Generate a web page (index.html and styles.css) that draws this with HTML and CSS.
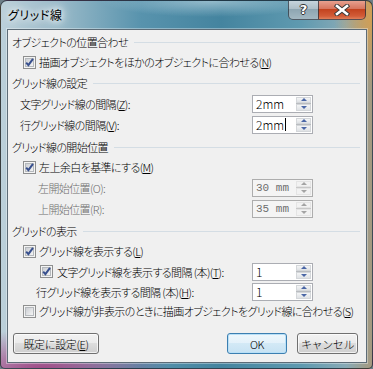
FILE: index.html
```html
<!DOCTYPE html>
<html lang="ja">
<head>
  <meta charset="UTF-8">
  <title>グリッド線</title>
  <link rel="stylesheet" href="styles.css">
</head>
<body>

<div class="window">
  <div class="titlebar">
    <span class="title">グリッド線</span>
    <div class="caption">
      <span class="cap help">?</span>
      <span class="cap close">
        <svg width="16" height="12" viewBox="0 0 16 12">
          <path d="M3 2 L13 10 M13 2 L3 10" stroke="#3a3a3a" stroke-width="4.5" stroke-linecap="square"/>
          <path d="M3 2 L13 10 M13 2 L3 10" stroke="#fff" stroke-width="2.6" stroke-linecap="square"/>
        </svg>
      </span>
    </div>
  </div>

  <div class="client">
    <div class="group-head"><span>オブジェクトの位置合わせ</span></div>
    <div class="row check-row">
      <svg class="cb"><use href="#cb-on"/></svg>
      <span>描画オブジェクトをほかのオブジェクトに合わせる(<u>N</u>)</span>
    </div>

    <div class="group-head gh2"><span>グリッド線の設定</span></div>
    <div class="row spin-row">
      <span class="lbl ind1">文字グリッド線の間隔(<u>Z</u>):</span>
      <div class="spin"><span class="val">2mm</span><span class="arrows"><i class="up"></i><i class="down"></i></span></div>
    </div>
    <div class="row spin-row">
      <span class="lbl ind1">行グリッド線の間隔(<u>V</u>):</span>
      <div class="spin"><span class="val">2mm<b class="caret"></b></span><span class="arrows"><i class="up"></i><i class="down"></i></span></div>
    </div>

    <div class="group-head gh3"><span>グリッド線の開始位置</span></div>
    <div class="row check-row">
      <svg class="cb"><use href="#cb-on"/></svg>
      <span>左上余白を基準にする(<u>M</u>)</span>
    </div>
    <div class="row spin-row disabled">
      <span class="lbl ind2">左開始位置(O):</span>
      <div class="spin"><span class="val mono">30 mm</span><span class="arrows"><i class="up"></i><i class="down"></i></span></div>
    </div>
    <div class="row spin-row disabled">
      <span class="lbl ind2">上開始位置(R):</span>
      <div class="spin"><span class="val mono">35 mm</span><span class="arrows"><i class="up"></i><i class="down"></i></span></div>
    </div>

    <div class="group-head gh3"><span>グリッドの表示</span></div>
    <div class="row check-row">
      <svg class="cb"><use href="#cb-on"/></svg>
      <span>グリッド線を表示する(<u>L</u>)</span>
    </div>
    <div class="row spin-row">
      <div class="nested">
        <svg class="cb"><use href="#cb-on"/></svg>
        <span>文字グリッド線を表示する間隔 (本)(<u>T</u>):</span>
      </div>
      <div class="spin"><span class="val">1</span><span class="arrows"><i class="up"></i><i class="down"></i></span></div>
    </div>
    <div class="row spin-row short">
      <span class="lbl ind3">行グリッド線を表示する間隔 (本)(<u>H</u>):</span>
      <div class="spin"><span class="val">1</span><span class="arrows"><i class="up"></i><i class="down"></i></span></div>
    </div>
    <div class="row check-row">
      <svg class="cb"><use href="#cb-off"/></svg>
      <span>グリッド線が非表示のときに描画オブジェクトをグリッド線に合わせる(<u>S</u>)</span>
    </div>

    <div class="footer">
      <button class="btn wide">既定に設定(<u>E</u>)</button>
      <span class="spacer"></span>
      <button class="btn default">OK</button>
      <button class="btn">キャンセル</button>
    </div>
  </div>
</div>

<svg class="defs" width="0" height="0">
  <defs>
    <linearGradient id="cb-fill" x1="0" y1="0" x2="1" y2="1">
      <stop offset="0" stop-color="#c9ccd1"/>
      <stop offset="1" stop-color="#f7f7f7"/>
    </linearGradient>
    <symbol id="cb-off" viewBox="0 0 13 13">
      <rect x="0.5" y="0.5" width="12" height="12" fill="#f4f4f4" stroke="#8e8f8f"/>
      <rect x="2.5" y="2.5" width="8" height="8" fill="url(#cb-fill)" stroke="#b5b9bd"/>
    </symbol>
    <symbol id="cb-on" viewBox="0 0 13 13">
      <rect x="0.5" y="0.5" width="12" height="12" fill="#f4f4f4" stroke="#8e8f8f"/>
      <rect x="2.5" y="2.5" width="8" height="8" fill="url(#cb-fill)" stroke="#b5b9bd"/>
      <path d="M3.2 6.6 L5.4 9.2 L10 2.8" stroke="#38508e" stroke-width="2" fill="none"/>
    </symbol>
  </defs>
</svg>

</body>
</html>
```

FILE: styles.css
```css
* {
  box-sizing: border-box;
}

body {
  margin: 0;
  background: #6d7f88;
  font-family: "Noto Sans CJK JP", sans-serif;
  font-size: 11px;
  font-weight: 300;
  letter-spacing: -0.6px;
  font-feature-settings: "palt";
  color: #000;
}

.window {
  width: 373px;
  height: 369px;
  border: 1px solid rgba(20, 30, 40, 0.75);
  border-radius: 7px 7px 5px 5px;
  overflow: hidden;
  display: flex;
  flex-direction: column;
  background:
    radial-gradient(ellipse 130px 40px at 40px 369px, rgba(160, 50, 120, 0.85), transparent),
    radial-gradient(ellipse 40px 70px at 373px 15px, rgba(215, 160, 80, 0.95), transparent),
    radial-gradient(ellipse 110px 16px at 210px 0, rgba(200, 222, 232, 0.6), transparent),
    linear-gradient(90deg, #bcd0da 0, #98b9c8 60px, #5893ad 140px, #44849f 220px, #5f9ab0 300px, #88aab6 345px, #a8987a 373px);
}

/* title bar */
.titlebar {
  height: 28px;
  display: flex;
  align-items: flex-start;
  padding-left: 7px;
}

.title {
  margin-top: 5px;
  font-size: 12px;
  font-weight: 400;
  letter-spacing: 0.6px;
  text-shadow: 0 0 6px #fff, 0 0 10px rgba(255, 255, 255, 0.9), 0 0 14px rgba(255, 255, 255, 0.8);
}

.caption {
  margin-left: auto;
  margin-right: 6px;
  margin-top: -1px;
  display: flex;
}

.cap {
  height: 20px;
  display: flex;
  align-items: center;
  justify-content: center;
  border: 1px solid rgba(40, 50, 60, 0.75);
  border-top: none;
}

.help {
  width: 30px;
  border-radius: 0 0 0 5px;
  border-right: none;
  background: linear-gradient(#c9d7df, #aebfc8 45%, #8ea6b2 50%, #a3b8c2);
  color: #fff;
  font-family: "DejaVu Sans", sans-serif;
  font-weight: bold;
  font-size: 13px;
  letter-spacing: 0;
  text-shadow: -1px 0 #333, 1px 0 #333, 0 -1px #333, 0 1px #333;
}

.close {
  width: 48px;
  border-radius: 0 0 5px 0;
  background: linear-gradient(#e9a695, #d7765f 45%, #c3431f 50%, #d25c38 85%, #e0805a);
}

/* client area */
.client {
  flex: 1;
  margin: 0 5px 5px 6px;
  border: 1px solid #5d6c77;
  box-shadow: 0 0 0 1px rgba(255, 255, 255, 0.35);
  background: #f0f0f0;
  padding: 2px 6px 0 4px;
  display: flex;
  flex-direction: column;
}

.row {
  display: flex;
  align-items: center;
  white-space: nowrap;
}

.group-head {
  height: 20px;
  display: flex;
  align-items: center;
  gap: 6px;
}

.group-head::after {
  content: "";
  flex: 1;
  height: 1px;
  background: #d4dde4;
}

.gh2 {
  margin-top: 1px;
}

.gh3 {
  margin-top: 2px;
}

.check-row {
  height: 20px;
  padding-left: 11px;
  gap: 3px;
}

.cb {
  width: 13px;
  height: 13px;
  flex: none;
}

.spin-row {
  height: 21px;
  padding-right: 47px;
}

.spin-row .spin {
  margin-left: auto;
}

.spin-row.short {
  height: 19px;
}

.ind1 {
  padding-left: 8px;
}

.ind2 {
  padding-left: 26px;
}

.ind3 {
  padding-left: 24px;
}

.nested {
  display: flex;
  align-items: center;
  gap: 4px;
  padding-left: 28px;
}

.disabled .lbl {
  color: #6d6d6d;
}

.spin {
  width: 61px;
  height: 18px;
  border: 1px solid #abadb3;
  background: #fff;
  display: flex;
  flex: none;
}

.val {
  flex: 1;
  padding-left: 3px;
  line-height: 16px;
  font-size: 12px;
  letter-spacing: 0;
  display: flex;
  align-items: center;
}

.mono {
  font-family: "Liberation Mono", monospace;
  font-size: 11px;
  font-weight: 400;
}

.caret {
  width: 1px;
  height: 13px;
  background: #000;
  margin-left: 1px;
}

.arrows {
  width: 15px;
  margin: 1px 1px 1px 0;
  display: flex;
  flex-direction: column;
  gap: 1px;
  background: #b9bcc0;
}

.arrows i {
  flex: 1;
  background: linear-gradient(#f4f5f6, #dfe2e5);
  border: 1px solid #d4d7da;
  display: flex;
  align-items: center;
  justify-content: center;
}

.arrows i::before {
  content: "";
  border-left: 3px solid transparent;
  border-right: 3px solid transparent;
}

.up::before {
  border-bottom: 3px solid #4b67a6;
}

.down::before {
  border-top: 3px solid #4b67a6;
}

.disabled .spin {
  background: #f4f4f4;
  border-color: #adadad;
}

.disabled .val {
  color: #6d6d6d;
}

.disabled .arrows {
  background: #c8c8c8;
}

.disabled .arrows i {
  background: #f2f2f2;
  border-color: #e4e4e4;
}

.disabled .up::before {
  border-bottom-color: #a4a4a4;
}

.disabled .down::before {
  border-top-color: #a4a4a4;
}

/* buttons */
.footer {
  display: flex;
  gap: 10px;
  margin-top: 12px;
  padding: 0 2px 0 1px;
}

.spacer {
  flex: 1;
}

.btn {
  height: 21px;
  width: 61px;
  padding: 0;
  white-space: nowrap;
  font-family: inherit;
  font-size: 11px;
  font-weight: 300;
  letter-spacing: -0.4px;
  color: #000;
  border: 1px solid #707070;
  border-radius: 3px;
  background: linear-gradient(#f2f2f2, #ebebeb 50%, #dddddd 50%, #cfcfcf);
  box-shadow: inset 0 0 0 1px rgba(255, 255, 255, 0.7);
}

.btn.wide {
  width: 86px;
}

.btn.default {
  width: 60px;
  border-color: #3c7fb1;
  background: linear-gradient(#eef7fc, #e3f1fa 50%, #d3e9f6 50%, #c7e2f3);
  box-shadow: inset 0 0 0 1px #b9e0f7;
}

.defs {
  display: block;
  width: 0;
  height: 0;
}
```
